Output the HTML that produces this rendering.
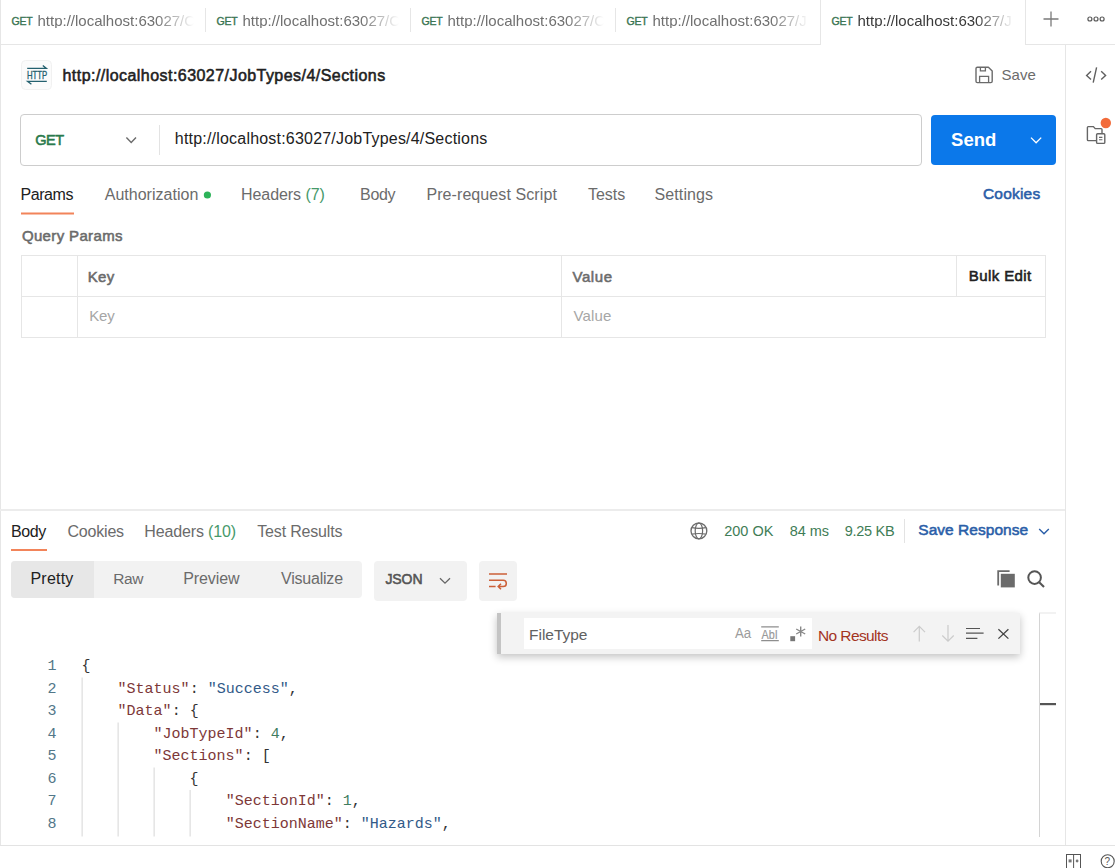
<!DOCTYPE html>
<html><head><meta charset="utf-8">
<style>
*{box-sizing:border-box;margin:0;padding:0}
html,body{width:1115px;height:868px;overflow:hidden;background:#fff}
body{position:relative;font-family:"Liberation Sans",sans-serif;color:#212121}
.t{position:absolute;white-space:nowrap}
.b{position:absolute}
.tu{position:absolute;top:12.8px;font-size:15px;line-height:15px;color:#707070;white-space:nowrap;width:156px;overflow:hidden;-webkit-mask-image:linear-gradient(to right,#000 0,#000 118px,transparent 156px)}
.code{position:absolute;left:0;top:612px;width:1039px;height:225px;overflow:hidden}
.ln{position:absolute;left:0;width:56.6px;text-align:right;font-family:"Liberation Mono",monospace;font-size:15px;line-height:22.5px;color:#527789;white-space:pre}
.cl{position:absolute;left:81.6px;font-family:"Liberation Mono",monospace;font-size:15px;line-height:22.5px;color:#333;white-space:pre}
.k{color:#7d3838}.s{color:#325a88}.n{color:#3f7d60}
</style></head><body>

<!-- backgrounds / boxes -->
<div class="b" style="left:20px;top:114px;width:902px;height:52px;border:1px solid #cdcdcd;border-radius:4px"></div>
<div class="b" style="left:931px;top:115px;width:125px;height:50px;background:#0b78ea;border-radius:4px"></div>
<div class="b" style="left:21px;top:255px;width:1025px;height:83px;border:1px solid #e6e6e6"></div>
<div class="b" style="left:11px;top:561px;width:351px;height:37px;background:#f2f2f2;border-radius:4px"></div>
<div class="b" style="left:11px;top:561px;width:83px;height:37px;background:#e7e7e7;border-radius:4px 0 0 4px"></div>
<div class="b" style="left:374px;top:561px;width:93px;height:40px;background:#f2f2f2;border-radius:4px"></div>
<div class="b" style="left:479px;top:561px;width:38px;height:40px;background:#f2f2f2;border-radius:4px"></div>

<!-- tab urls -->
<div class="tu" style="left:37.5px">http://localhost:63027/C</div>
<div class="tu" style="left:242.5px">http://localhost:63027/C</div>
<div class="tu" style="left:447.5px">http://localhost:63027/C</div>
<div class="tu" style="left:652.5px">http://localhost:63027/J</div>
<div class="tu" style="left:857.5px;color:#3a3a3a">http://localhost:63027/J</div>

<!-- code -->
<div class="code">
<div class="ln" style="top:44px">1
2
3
4
5
6
7
8</div>
<div class="cl" style="top:44px">{
    <span class="k">"Status"</span>: <span class="s">"Success"</span>,
    <span class="k">"Data"</span>: {
        <span class="k">"JobTypeId"</span>: <span class="n">4</span>,
        <span class="k">"Sections"</span>: [
            {
                <span class="k">"SectionId"</span>: <span class="n">1</span>,
                <span class="k">"SectionName"</span>: <span class="s">"Hazards"</span>,</div>
</div>

<!-- find widget -->
<div class="b" style="left:497px;top:613px;width:523px;height:41px;background:#f3f3f3;border-left:4px solid #c4c4c4;box-shadow:0 3px 8px rgba(0,0,0,0.24)"></div>
<div class="b" style="left:524px;top:618px;width:288px;height:31px;background:#fff"></div>

<div class="t" style="left:11.5px;top:15.8px;font-size:10.5px;line-height:10.5px;letter-spacing:-0.25px;color:#3a7553;font-weight:400;-webkit-text-stroke:0.4px currentColor;">GET</div>
<div class="t" style="left:216.5px;top:15.8px;font-size:10.5px;line-height:10.5px;letter-spacing:-0.25px;color:#3a7553;font-weight:400;-webkit-text-stroke:0.4px currentColor;">GET</div>
<div class="t" style="left:421.5px;top:15.8px;font-size:10.5px;line-height:10.5px;letter-spacing:-0.25px;color:#3a7553;font-weight:400;-webkit-text-stroke:0.4px currentColor;">GET</div>
<div class="t" style="left:626.5px;top:15.8px;font-size:10.5px;line-height:10.5px;letter-spacing:-0.25px;color:#3a7553;font-weight:400;-webkit-text-stroke:0.4px currentColor;">GET</div>
<div class="t" style="left:831.5px;top:15.8px;font-size:10.5px;line-height:10.5px;letter-spacing:-0.25px;color:#3a7553;font-weight:400;-webkit-text-stroke:0.4px currentColor;">GET</div>
<div class="t" style="left:62.5px;top:67.5px;font-size:16px;line-height:16px;letter-spacing:0.451px;color:#212121;font-weight:400;-webkit-text-stroke:0.55px currentColor;">http://localhost:63027/JobTypes/4/Sections</div>
<div class="t" style="left:1001.4px;top:66.8px;font-size:15px;line-height:15px;letter-spacing:0.1px;color:#6b6b6b;font-weight:400;">Save</div>
<div class="t" style="left:35.2px;top:132.6px;font-size:14.5px;line-height:14.5px;letter-spacing:-0.45px;color:#2a7a4c;font-weight:400;-webkit-text-stroke:0.55px currentColor;">GET</div>
<div class="t" style="left:174.8px;top:131.3px;font-size:16px;line-height:16px;letter-spacing:0.202px;color:#212121;font-weight:400;">http://localhost:63027/JobTypes/4/Sections</div>
<div class="t" style="left:951.1px;top:130.9px;font-size:18.5px;line-height:18.5px;letter-spacing:0.033px;color:#fff;font-weight:700;">Send</div>
<div class="t" style="left:20.5px;top:187.2px;font-size:16px;line-height:16px;letter-spacing:-0.44px;color:#212121;font-weight:400;">Params</div>
<div class="t" style="left:104.7px;top:187.2px;font-size:16px;line-height:16px;letter-spacing:0.017px;color:#6b6b6b;font-weight:400;">Authorization</div>
<div class="t" style="left:241.0px;top:187.2px;font-size:16px;line-height:16px;letter-spacing:-0.07px;color:#6b6b6b;font-weight:400;">Headers <span style="color:#46996a">(7)</span></div>
<div class="t" style="left:360.1px;top:187.2px;font-size:16px;line-height:16px;letter-spacing:-0.333px;color:#6b6b6b;font-weight:400;">Body</div>
<div class="t" style="left:426.4px;top:187.2px;font-size:16px;line-height:16px;letter-spacing:0.088px;color:#6b6b6b;font-weight:400;">Pre-request Script</div>
<div class="t" style="left:587.9px;top:187.2px;font-size:16px;line-height:16px;letter-spacing:0.0px;color:#6b6b6b;font-weight:400;">Tests</div>
<div class="t" style="left:654.5px;top:187.2px;font-size:16px;line-height:16px;letter-spacing:0.114px;color:#6b6b6b;font-weight:400;">Settings</div>
<div class="t" style="left:982.9px;top:186.0px;font-size:15.5px;line-height:15.5px;letter-spacing:0.217px;color:#2a5ea8;font-weight:400;-webkit-text-stroke:0.55px currentColor;">Cookies</div>
<div class="t" style="left:21.9px;top:228.0px;font-size:15px;line-height:15px;letter-spacing:0.355px;color:#6b6b6b;font-weight:400;-webkit-text-stroke:0.55px currentColor;">Query Params</div>
<div class="t" style="left:87.7px;top:268.7px;font-size:15px;line-height:15px;letter-spacing:0.3px;color:#6b6b6b;font-weight:400;-webkit-text-stroke:0.55px currentColor;">Key</div>
<div class="t" style="left:572.4px;top:268.7px;font-size:15px;line-height:15px;letter-spacing:0.625px;color:#6b6b6b;font-weight:400;-webkit-text-stroke:0.55px currentColor;">Value</div>
<div class="t" style="left:968.8px;top:268.0px;font-size:15px;line-height:15px;letter-spacing:0.4px;color:#212121;font-weight:400;-webkit-text-stroke:0.55px currentColor;">Bulk Edit</div>
<div class="t" style="left:89.3px;top:307.5px;font-size:15px;line-height:15px;letter-spacing:-0.25px;color:#a6a6a6;font-weight:400;">Key</div>
<div class="t" style="left:573.5px;top:307.5px;font-size:15px;line-height:15px;letter-spacing:0.15px;color:#a6a6a6;font-weight:400;">Value</div>
<div class="t" style="left:10.9px;top:523.5px;font-size:16px;line-height:16px;letter-spacing:-0.367px;color:#212121;font-weight:400;">Body</div>
<div class="t" style="left:67.5px;top:523.5px;font-size:16px;line-height:16px;letter-spacing:-0.2px;color:#6b6b6b;font-weight:400;">Cookies</div>
<div class="t" style="left:144.3px;top:523.5px;font-size:16px;line-height:16px;letter-spacing:-0.145px;color:#6b6b6b;font-weight:400;">Headers <span style="color:#46996a">(10)</span></div>
<div class="t" style="left:257.3px;top:523.5px;font-size:16px;line-height:16px;letter-spacing:-0.182px;color:#6b6b6b;font-weight:400;">Test Results</div>
<div class="t" style="left:724.2px;top:523.6px;font-size:14.5px;line-height:14.5px;letter-spacing:0.0px;color:#3f7d56;font-weight:400;">200 OK</div>
<div class="t" style="left:789.8px;top:523.6px;font-size:14.5px;line-height:14.5px;letter-spacing:-0.075px;color:#3f7d56;font-weight:400;">84 ms</div>
<div class="t" style="left:844.7px;top:523.6px;font-size:14.5px;line-height:14.5px;letter-spacing:-0.267px;color:#3f7d56;font-weight:400;">9.25 KB</div>
<div class="t" style="left:918.3px;top:522.3px;font-size:15.5px;line-height:15.5px;letter-spacing:0.033px;color:#2a5ea8;font-weight:400;-webkit-text-stroke:0.55px currentColor;">Save Response</div>
<div class="t" style="left:30.5px;top:571.0px;font-size:16px;line-height:16px;letter-spacing:0.2px;color:#212121;font-weight:400;">Pretty</div>
<div class="t" style="left:113.3px;top:571.0px;font-size:15.5px;line-height:15.5px;letter-spacing:-0.45px;color:#6b6b6b;font-weight:400;">Raw</div>
<div class="t" style="left:183.2px;top:571.0px;font-size:16px;line-height:16px;letter-spacing:-0.083px;color:#6b6b6b;font-weight:400;">Preview</div>
<div class="t" style="left:281.0px;top:571.0px;font-size:16px;line-height:16px;letter-spacing:-0.212px;color:#6b6b6b;font-weight:400;">Visualize</div>
<div class="t" style="left:385.4px;top:572.2px;font-size:14px;line-height:14px;letter-spacing:-0.067px;color:#555555;font-weight:400;-webkit-text-stroke:0.55px currentColor;">JSON</div>
<div class="t" style="left:529.0px;top:627.3px;font-size:15.5px;line-height:15.5px;letter-spacing:-0.014px;color:#616161;font-weight:400;">FileType</div>
<div class="t" style="left:818.0px;top:628.2px;font-size:15.5px;line-height:15.5px;letter-spacing:-0.6px;color:#a3341f;font-weight:400;">No Results</div>

<svg class="b" style="left:0;top:0" width="1115" height="868" viewBox="0 0 1115 868" fill="none">
 <!-- page lines -->
 <rect x="0" y="0" width="1" height="845" fill="#e6e6e6"/>
 <rect x="0" y="44" width="821" height="1" fill="#e6e6e6"/>
 <rect x="1025" y="44" width="90" height="1" fill="#e6e6e6"/>
 <rect x="820" y="0" width="1" height="45" fill="#e6e6e6"/>
 <rect x="1025" y="0" width="1" height="45" fill="#e6e6e6"/>
 <rect x="205" y="8" width="1" height="24" fill="#e6e6e6"/>
 <rect x="410" y="8" width="1" height="24" fill="#e6e6e6"/>
 <rect x="615" y="8" width="1" height="24" fill="#e6e6e6"/>
 <rect x="1065" y="44" width="1" height="801" fill="#e6e6e6"/>
 <rect x="0" y="509" width="1065" height="2" fill="#ececec"/>
 <rect x="0" y="845" width="1115" height="1" fill="#e3e3e3"/>
 <!-- url divider -->
 <rect x="159" y="125" width="1" height="30" fill="#e3e3e3"/>
 <!-- table lines -->
 <rect x="21" y="296" width="1025" height="1" fill="#e6e6e6"/>
 <rect x="77" y="255" width="1" height="83" fill="#e6e6e6"/>
 <rect x="561" y="255" width="1" height="83" fill="#e6e6e6"/>
 <rect x="956" y="255" width="1" height="41" fill="#e6e6e6"/>
 <!-- response divider -->
 <rect x="904" y="519" width="1" height="24" fill="#e3e3e3"/>
 <!-- underlines -->
 <rect x="21" y="212.5" width="53" height="2" fill="#f2845a"/>
 <rect x="11" y="549" width="36" height="2" fill="#f2845a"/>
 <!-- auth dot -->
 <circle cx="207.4" cy="195" r="3.6" fill="#2db359"/>

 <!-- plus / more -->
 <path d="M1051 11.5V26.5M1043.5 19H1058.5" stroke="#7a7a7a" stroke-width="1.3"/>
 <circle cx="1089.9" cy="19" r="2" stroke="#5a5a5a" stroke-width="1.2"/>
 <circle cx="1096" cy="19" r="2" stroke="#5a5a5a" stroke-width="1.2"/>
 <circle cx="1102.1" cy="19" r="2" stroke="#5a5a5a" stroke-width="1.2"/>

 <!-- HTTP icon -->
 <rect x="21.5" y="60.5" width="30" height="29" rx="4" fill="#fbfbfb" stroke="#f1f1f1"/>
 <path d="M27.2 68.4H46.4L42.8 65.4" stroke="#24616f" stroke-width="1.3"/>
 <path d="M46.8 81.3H27.6L31.4 84.2" stroke="#24616f" stroke-width="1.3"/>
 <text x="26.9" y="78.7" font-family="Liberation Sans" font-size="11" font-weight="400" fill="#24616f" stroke="#24616f" stroke-width="0.35" textLength="20.3" lengthAdjust="spacingAndGlyphs">HTTP</text>

 <!-- save floppy -->
 <path d="M978 67.2H988.4L992.2 71V81.2Q992.2 82.6 990.8 82.6H977.4Q976 82.6 976 81.2V68.6Q976 67.2 977.4 67.2Z" stroke="#6b6b6b" stroke-width="1.4" stroke-linejoin="round"/>
 <path d="M980.4 67.2V70.8H985.4V67.2" stroke="#6b6b6b" stroke-width="1.3"/>
 <path d="M979.6 82.6V76.4H988.6V82.6" stroke="#6b6b6b" stroke-width="1.3"/>

 <!-- url chevron -->
 <path d="M126.4 137.6L131.2 142.6L136 137.6" stroke="#6b6b6b" stroke-width="1.4"/>
 <!-- send chevron -->
 <path d="M1031 137.6L1036.1 142.8L1041.2 137.6" stroke="#fff" stroke-width="1.3"/>

 <!-- sidebar icons -->
 <path d="M1091 71.2L1086.6 75.4L1091 79.6M1101.2 71.2L1105.6 75.4L1101.2 79.6M1096.6 67.4L1093.2 82.6" stroke="#5f5f5f" stroke-width="1.4"/>
 <path d="M1096 140.6H1088.2Q1087.4 140.6 1087.4 139.8V127.4Q1087.4 126.6 1088.2 126.6H1093.4L1095.2 128.6H1101.2Q1102 128.6 1102 129.4V133.2" stroke="#666" stroke-width="1.4"/>
 <rect x="1096.6" y="133.8" width="8.2" height="9.6" rx="1" stroke="#666" stroke-width="1.4"/>
 <path d="M1099 137.4H1102.4M1099 139.8H1102.4" stroke="#666" stroke-width="1.1"/>
 <circle cx="1105.8" cy="123" r="5.2" fill="#f26b3a"/>

 <!-- globe -->
 <circle cx="698.9" cy="530.9" r="7.9" stroke="#6b6b6b" stroke-width="1.3"/>
 <ellipse cx="698.9" cy="530.9" rx="3.7" ry="7.9" stroke="#6b6b6b" stroke-width="1.2"/>
 <path d="M692 527.6Q698.9 529 705.8 527.6M692 534.2Q698.9 532.8 705.8 534.2" stroke="#6b6b6b" stroke-width="1.2"/>

 <!-- save response chevron -->
 <path d="M1039.2 529L1044 533.8L1048.8 529" stroke="#2a5ea8" stroke-width="1.4"/>
 <!-- json chevron -->
 <path d="M440 578.2L445 583.2L450 578.2" stroke="#666" stroke-width="1.3"/>
 <!-- wrap icon -->
 <path d="M489 573.9H507M489 580.3H503.2A3.1 3.1 0 0 1 503.2 586.5H498.4M489 586.5H495.6M501 583.8L498.2 586.5L501 589.2" stroke="#cc6039" stroke-width="1.5"/>
 <!-- copy -->
 <path d="M998.2 585.4V571.2H1009.6" stroke="#6b6b6b" stroke-width="1.8"/>
 <rect x="1000.8" y="573.8" width="14" height="13.6" fill="#6b6b6b"/>
 <!-- search -->
 <circle cx="1034.6" cy="577.6" r="6.3" stroke="#555" stroke-width="2"/>
 <path d="M1039.2 582.2L1044 587" stroke="#555" stroke-width="2.1"/>

 <!-- find widget icons -->
 <text x="735" y="638" font-family="Liberation Sans" font-size="14" fill="#9c9c9c" textLength="16.2" lengthAdjust="spacingAndGlyphs">Aa</text>
 <text x="761.6" y="638.6" font-family="Liberation Sans" font-size="13.5" fill="#999" stroke="#999" stroke-width="0.2" textLength="16.2" lengthAdjust="spacingAndGlyphs">AbI</text>
 <path d="M761.2 626.9H778.8M761.2 640.6H778.8" stroke="#8e8e8e" stroke-width="1.3"/>
 <rect x="790.3" y="636.2" width="4.8" height="5" fill="#777"/>
 <path d="M800.7 626.4V636.6M796.2 629L805.2 634M796.2 634L805.2 629" stroke="#888" stroke-width="1.4"/>
 <path d="M919.3 626.4V641.4M913.6 632.1L919.3 626.4L925 632.1" stroke="#cbcbcb" stroke-width="1.2"/>
 <path d="M948 625V641.2M942.3 635.5L948 641.2L953.7 635.5" stroke="#cbcbcb" stroke-width="1.2"/>
 <path d="M966 628.5H980M966 633.1H983.6M966 638.3H977.4" stroke="#555" stroke-width="1.2"/>
 <path d="M998.4 629.2L1008.4 638.6M1008.4 629.2L998.4 638.6" stroke="#444" stroke-width="1.3"/>

 <!-- editor scrollbar -->
 <rect x="1039" y="613" width="1" height="224" fill="#d4d4d4"/>
 <rect x="1039" y="612.5" width="17" height="1" fill="#e6e6e6"/>
 <rect x="1040" y="703" width="16" height="2.2" fill="#555"/>

 <!-- indent guides -->
 <rect x="81.6" y="677.5" width="1" height="159" fill="#d6d6d6"/>
 <rect x="117.6" y="722.5" width="1" height="114" fill="#d6d6d6"/>
 <rect x="153.6" y="767.5" width="1" height="69" fill="#d6d6d6"/>
 <rect x="189.6" y="790" width="1" height="46.5" fill="#d6d6d6"/>

 <!-- status bar icons -->
 <rect x="1066.5" y="854.5" width="14" height="16" stroke="#555" stroke-width="1"/>
 <path d="M1073.6 854.5V868" stroke="#555" stroke-width="1"/>
 <rect x="1068.6" y="859.4" width="3" height="3" fill="#777"/>
 <circle cx="1077.1" cy="861" r="1.4" fill="#777"/>
 <circle cx="1107.7" cy="861.2" r="6.5" stroke="#555" stroke-width="1.1"/>
 <text x="1104.6" y="865.4" font-family="Liberation Sans" font-size="10" fill="#555">?</text>
</svg>
</body></html>
